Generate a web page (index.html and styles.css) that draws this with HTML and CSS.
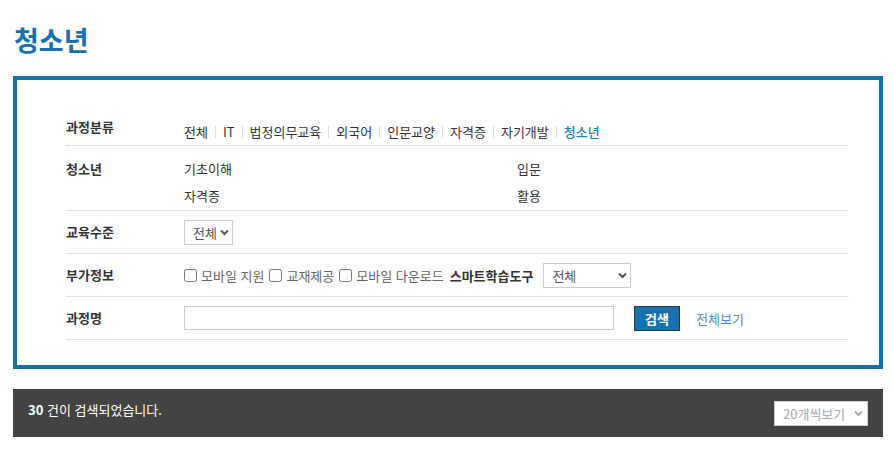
FILE: index.html
```html
<!DOCTYPE html>
<html lang="ko">
<head>
<meta charset="utf-8">
<title>청소년</title>
<link rel="stylesheet" href="styles.css">
</head>
<body>
<div class="page">
  <h1 class="title">청소년</h1>
  <div class="box">
    <div class="row row1">
      <div class="label">과정분류</div>
      <ul class="cats">
        <li>전체</li><li>IT</li><li>법정의무교육</li><li>외국어</li><li>인문교양</li><li>자격증</li><li>자기개발</li><li class="active">청소년</li>
      </ul>
    </div>
    <div class="row row2">
      <div class="label">청소년</div>
      <div class="subs">
        <span>기초이해</span><span>입문</span>
        <span>자격증</span><span>활용</span>
      </div>
    </div>
    <div class="row rowc">
      <div class="label">교육수준</div>
      <div class="fsel fsel-sm"><span>전체</span><svg width="9" height="7" viewBox="0 0 9 7"><path d="M1 1.5 L4.5 5 L8 1.5" fill="none" stroke="#555" stroke-width="2"/></svg></div>
    </div>
    <div class="row rowc">
      <div class="label">부가정보</div>
      <div class="opts">
        <label class="chk"><input type="checkbox"><span>모바일 지원</span></label>
        <label class="chk"><input type="checkbox"><span>교재제공</span></label>
        <label class="chk"><input type="checkbox"><span>모바일 다운로드</span></label>
        <strong class="smart">스마트학습도구</strong>
        <div class="fsel fsel-md"><span>전체</span><svg width="9" height="7" viewBox="0 0 9 7"><path d="M1 1.5 L4.5 5 L8 1.5" fill="none" stroke="#555" stroke-width="2"/></svg></div>
      </div>
    </div>
    <div class="row rowc">
      <div class="label">과정명</div>
      <input class="name" type="text">
      <button class="btn" type="button">검색</button>
      <a class="all" href="#">전체보기</a>
    </div>
  </div>
  <div class="bar">
    <p class="count"><b>30</b> 건이 검색되었습니다.</p>
    <div class="fsel fsel-bar"><span>20개씩보기</span><svg width="9" height="7" viewBox="0 0 9 7"><path d="M1 1.5 L4.5 5 L8 1.5" fill="none" stroke="#aaa" stroke-width="2"/></svg></div>
  </div>
</div>
</body>
</html>
```

FILE: styles.css
```css
* { box-sizing: border-box; }
body {
  margin: 0;
  font-family: "Noto Sans CJK KR", "Noto Sans", sans-serif;
  font-size: 13px;
  color: #333;
  background: #fff;
}
.page {
  width: 894px;
  padding: 25px 11px 0 13px;
}
.title {
  margin: 0 0 21px 1px;
  font-size: 27px;
  line-height: 30px;
  font-weight: 700;
  color: #1a70aa;
}
.box {
  width: 870px;
  border: 4px solid #1672ae;
  padding: 25px 30px 25px 49px;
}
.row {
  display: flex;
  border-bottom: 1px solid #e3e3e3;
}
.label {
  width: 118px;
  flex: none;
  font-weight: 700;
  line-height: 20px;
  color: #333;
}
.row1 { height: 41px; padding-top: 12px; }
.row2 { height: 65px; padding-top: 13px; }
.rowc { height: 43px; align-items: center; }

.cats {
  display: flex;
  margin: 0;
  padding: 0;
  list-style: none;
  line-height: 20px;
  padding-top: 1px;
}
.cats li {
  display: flex;
  align-items: center;
}
.cats li + li::before {
  content: "";
  width: 1px;
  height: 12px;
  background: #dcdcdc;
  margin: 0 7px;
}
.cats .active { color: #1787b4; font-weight: 500; }

.subs {
  display: grid;
  grid-template-columns: 333px auto;
  row-gap: 3px;
  line-height: 20px;
}

.fsel {
  display: flex;
  align-items: center;
  justify-content: space-between;
  height: 25px;
  border: 1px solid #ccc;
  background: #fff;
  color: #555;
  padding: 0 3px 0 8px;
}
.fsel-sm { width: 49px; }
.fsel-md { width: 88px; margin-left: 10px; }
.fsel-bar { width: 94px; color: #aaa; margin-top: 1px; padding-right: 4px; }

.opts {
  display: flex;
  align-items: center;
}
.chk {
  display: flex;
  align-items: center;
  color: #666;
  margin-right: 5px;
}
.chk input {
  width: 13px;
  height: 13px;
  margin: 0 4px 0 0;
}
.smart { font-weight: 700; color: #333; margin-left: 1px; }

.name {
  width: 430px;
  height: 24px;
  border: 1px solid #ccc;
  margin: 0;
  padding: 0 6px;
  font: inherit;
}
.btn {
  width: 46px;
  height: 25px;
  margin-left: 20px;
  border: 1px solid #333;
  background: #1672ae;
  color: #fff;
  font: inherit;
  font-weight: 700;
  padding: 0;
}
.all {
  margin-left: 16px;
  color: #4a8fd6;
  text-decoration: none;
}

.bar {
  width: 870px;
  height: 48px;
  margin-top: 20px;
  background: #434343;
  display: flex;
  justify-content: space-between;
  align-items: flex-start;
  padding: 11px 15px 0 15px;
}
.count {
  margin: 0;
  color: #fff;
  line-height: 20px;
}
.count b { font-weight: 700; }
```
